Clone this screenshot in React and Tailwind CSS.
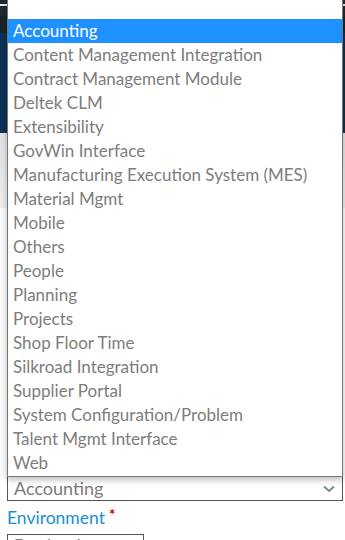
import React from "react";

const options = [
  "Accounting",
  "Content Management Integration",
  "Contract Management Module",
  "Deltek CLM",
  "Extensibility",
  "GovWin Interface",
  "Manufacturing Execution System (MES)",
  "Material Mgmt",
  "Mobile",
  "Others",
  "People",
  "Planning",
  "Projects",
  "Shop Floor Time",
  "Silkroad Integration",
  "Supplier Portal",
  "System Configuration/Problem",
  "Talent Mgmt Interface",
  "Web",
];

export default function App() {
  const selected = "Accounting";

  return (
    <div className="relative w-[345px] h-[540px] overflow-hidden bg-white font-['Lato','Liberation_Sans',sans-serif]">
      {/* page behind the open list */}
      <div className="h-[4px] bg-[#1f2b31]" />
      <div className="h-[2px] bg-[#e8e8e8]" />
      <div className="h-[10px] bg-[#1f2b31]" />
      <div className="h-[17px] bg-[#17232b]" />
      <div className="h-[100px] bg-[#0b3157]" />
      <div className="h-[75px] bg-gradient-to-b from-[#e2e2e2] to-[#ececec]" />
      <div className="h-[268px] bg-[#fbfbfb]" />

      {/* form */}
      <div className="pl-[7px]">
        <div className="flex items-center justify-between w-[336px] h-[25px] border border-[#555] bg-white pl-[6px] pr-[6px] text-[18px] leading-none text-[#7a7a7a]">
          <span className="-mt-[2px]">Accounting</span>
          <svg width="14" height="10" viewBox="0 0 14 10">
            <path d="M2 2.5 L7 7 L12 2.5" fill="none" stroke="#7c8a8c" strokeWidth="2" />
          </svg>
        </div>
        <div className="mt-[6px] flex items-start text-[17.5px] leading-[22px] text-[#1a8fd3]">
          Environment
          <span className="ml-[4px] text-[15px] leading-[14px] font-bold text-[#c00000]">*</span>
        </div>
        <div className="mt-[5px] w-[137px] h-[25px] border border-[#555] bg-white pl-[6px] text-[18px] leading-[20px] text-[#7a7a7a]">
          Production
        </div>
      </div>

      {/* open listbox */}
      <div className="absolute left-[7px] top-0 w-[336px] h-[477px] border border-t-0 border-[#767676] bg-white shadow-[0_3px_6px_rgba(0,0,0,0.25)]">
        <div className="h-[19px]" />
        {options.map((o) => (
          <div
            key={o}
            className={`h-[24px] pl-[5px] flex items-center text-[17px] whitespace-nowrap ${
              o === selected ? "bg-[#1e90ff] text-white" : "text-[#7d7d7d]"
            }`}
          >
            {o}
          </div>
        ))}
      </div>
    </div>
  );
}
